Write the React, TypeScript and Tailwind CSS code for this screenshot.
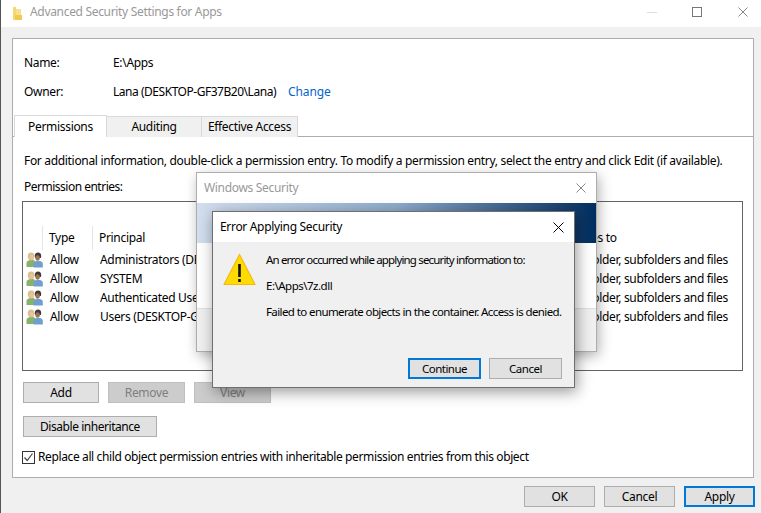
const ENTRIES = [
  "Administrators (DESKTOP-GF37B20\\Administrators)",
  "SYSTEM",
  "Authenticated Users",
  "Users (DESKTOP-GF37B20\\Users)",
];

function CloseX({ size, color, width = 1 }: { size: number; color: string; width?: number }) {
  return (
    <svg width={size} height={size} viewBox={`0 0 ${size} ${size}`} className="shrink-0">
      <path d={`M0.5 0.5 L${size - 0.5} ${size - 0.5} M${size - 0.5} 0.5 L0.5 ${size - 0.5}`} stroke={color} strokeWidth={width} fill="none" />
    </svg>
  );
}

function UsersIcon() {
  return (
    <svg width="17" height="16" viewBox="0 0 17 16" className="shrink-0">
      <path d="M0.5 15 V11 C0.5 9.2 2.4 8.4 4 8 L7 8 C8.6 8.4 9 9.2 9.5 10 V15 Z" fill="#86b36a" />
      <path d="M1.8 5 C1.5 1.8 3.2 0.6 5.2 0.6 C7.4 0.6 8.6 2 8.4 5 C8 7.4 6.8 8.6 5.2 8.6 C3.6 8.6 2.2 7.4 1.8 5 Z" fill="#d8c089" />
      <ellipse cx="5.8" cy="5.2" rx="2" ry="2.6" fill="#e9c3a0" />
      <path d="M7.5 15.5 V12 C7.5 10 9.4 9.2 11 9 L14 9 C15.8 9.4 16.8 10.4 16.8 12 V15.5 Z" fill="#6f9fd0" />
      <path d="M8.8 4.6 C8.6 1.6 10.2 0.6 12 0.6 C14 0.6 15.4 2 15.2 4.6 L14.8 6 L9.4 6 Z" fill="#3d3a38" />
      <ellipse cx="11.6" cy="6" rx="2.2" ry="2.8" fill="#9b7253" />
    </svg>
  );
}

function WarningIcon() {
  return (
    <svg width="33" height="33" viewBox="0 0 33 33" className="shrink-0">
      <path d="M16.5 1.5 L32 31.5 H1 Z" fill="#ffdc00" stroke="#f5b916" strokeWidth="1.2" strokeLinejoin="round" />
      <rect x="15.2" y="11" width="2.6" height="13" fill="#111111" />
      <rect x="15.2" y="26" width="2.6" height="3" fill="#111111" />
    </svg>
  );
}

function FolderIcon() {
  return (
    <svg width="10" height="13" viewBox="0 0 10 13" className="shrink-0">
      <path d="M1 0 H4 V13 H1 Z" fill="#f6d775" />
      <path d="M4 2 H9 V12 H4 Z" fill="#f9e08e" />
      <path d="M3 8 H10 V13 H3 Z" fill="#f2c94c" />
    </svg>
  );
}

function Btn({ label, w, primary, disabled }: { label: string; w: string; primary?: boolean; disabled?: boolean }) {
  const tone = disabled
    ? "bg-[#cccccc] border border-[#bfbfbf] text-[#7f7f7f]"
    : primary
      ? "bg-[#e1e1e1] border-2 border-[#0078d7] text-black"
      : "bg-[#e1e1e1] border border-[#adadad] text-black";
  return <div className={`${w} h-[21px] flex items-center justify-center ${tone}`}>{label}</div>;
}

function Tab({ label, w, active }: { label: string; w: string; active?: boolean }) {
  return (
    <div
      className={`${w} flex items-center justify-center border-[#d9d9d9] ${
        active
          ? "h-[22px] bg-white border-t border-l border-r -mb-px z-10"
          : "h-[21px] mt-px bg-[#f0f0f0] border-t border-r"
      }`}
    >
      {label}
    </div>
  );
}

export default function App() {
  return (
    <div className="relative w-[761px] h-[513px] overflow-hidden bg-[#f0f0f0] border-l border-[#555555] text-[12px] leading-[20px] tracking-[-0.32px] text-black font-['Noto_Sans',sans-serif]">
      <div className="h-[27px] bg-white flex items-center pl-[11px]">
        <FolderIcon />
        <span className="ml-[8px] mb-[3px] text-[#999999]">Advanced Security Settings for Apps</span>
        <div className="ml-auto flex items-center mb-[3px]">
          <div className="w-[10px] h-px bg-[#dddddd]" />
          <div className="ml-[35px] w-[10px] h-[10px] border border-[#777777]" />
          <div className="ml-[36px] mr-[13px]">
            <CloseX size={10} color="#888888" />
          </div>
        </div>
      </div>

      <div className="mt-[11px] ml-[11px] w-[742px] h-[440px] bg-white border border-[#adadad] pt-[14px]">
        <div className="flex pl-[11px]">
          <span className="w-[89px]">Name:</span>
          <span>E:\Apps</span>
        </div>
        <div className="flex pl-[11px] mt-[9px]">
          <span className="w-[89px]">Owner:</span>
          <span className="tracking-[-0.47px]">Lana (DESKTOP-GF37B20\Lana)</span>
          <span className="ml-[12px] tracking-[-0.1px] text-[#0066cc]">Change</span>
        </div>

        <div className="flex mt-[13px] pl-px h-[22px] border-b border-[#adadad]">
          <Tab label="Permissions" w="w-[93px]" active />
          <Tab label="Auditing" w="w-[95px]" />
          <Tab label="Effective Access" w="w-[96px]" />
        </div>

        <div className="mt-[14px] pl-[11px]">
          For additional information, double-click a permission entry. To modify a permission entry, select the entry and click Edit (if available).
        </div>
        <div className="mt-[6px] pl-[11px] tracking-[-0.5px]">Permission entries:</div>

        <div className="mt-[4px] ml-[9px] w-[721px] h-[170px] border border-[#646464] pt-[24px]">
          <div className="flex h-[24px] items-center">
            <div className="w-[20px] h-full border-r border-[#e5e5e5]" />
            <div className="w-[50px] h-full pl-[6px] border-r border-[#e5e5e5] flex items-center">Type</div>
            <div className="flex-1 pl-[6px]">Principal</div>
            <div className="w-[178px]">Applies to</div>
          </div>
          {ENTRIES.map((principal) => (
            <div key={principal} className="flex h-[19px] items-center">
              <div className="w-[27px] pl-[3px]">
                <UsersIcon />
              </div>
              <div className="w-[50px]">Allow</div>
              <div className="w-[100px] whitespace-nowrap overflow-hidden">{principal}</div>
              <div className="flex-1" />
              <div className="w-[178px] whitespace-nowrap">This folder, subfolders and files</div>
            </div>
          ))}
        </div>

        <div className="flex mt-[11px] ml-[10px] gap-[9px]">
          <Btn label="Add" w="w-[76px]" />
          <Btn label="Remove" w="w-[77px]" disabled />
          <Btn label="View" w="w-[77px]" disabled />
        </div>
        <div className="mt-[13px] ml-[10px] tracking-[-0.45px]">
          <Btn label="Disable inheritance" w="w-[134px]" />
        </div>
        <div className="flex items-center mt-[10px] ml-[9px]">
          <div className="w-[13px] h-[13px] border border-[#333333] flex items-center justify-center">
            <svg width="11" height="11" viewBox="0 0 11 11">
              <path d="M1.5 5.5 L4.2 8.5 L9.5 1.5" fill="none" stroke="#444444" strokeWidth="1.2" />
            </svg>
          </div>
          <span className="ml-[3px] tracking-[-0.38px]">Replace all child object permission entries with inheritable permission entries from this object</span>
        </div>
      </div>

      <div className="flex justify-end gap-[9px] mt-[8px] mr-[6px]">
        <Btn label="OK" w="w-[71px]" />
        <Btn label="Cancel" w="w-[71px]" />
        <Btn label="Apply" w="w-[71px]" primary />
      </div>

      {/* dialog behind */}
      <div className="absolute left-[195px] top-[172px] w-[401px] h-[180px] bg-white border border-[#adadad] shadow-[2px_4px_12px_rgba(0,0,0,0.3)]">
        <div className="h-[30px] flex items-center pl-[7px] text-[#999999]">
          <span>Windows Security</span>
          <div className="ml-auto mr-[10px]">
            <CloseX size={10} color="#888888" />
          </div>
        </div>
        <div className="h-[40px] bg-gradient-to-r from-[#d3deee] via-[#8eaccc] to-[#002e5f]" />
        <div className="h-[65px] bg-white" />
        <div className="h-[43px] bg-[#f0f0f0] border-t border-[#dfdfdf]" />
      </div>

      {/* error dialog */}
      <div className="absolute left-[211px] top-[211px] w-[363px] h-[177px] bg-[#f0f0f0] border border-[#6f6f6f] shadow-[2px_4px_14px_rgba(0,0,0,0.4)]">
        <div className="h-[30px] bg-white flex items-center pl-[7px]">
          <span>Error Applying Security</span>
          <div className="ml-auto mr-[10px]">
            <CloseX size={11} color="#000000" />
          </div>
        </div>
        <div className="flex pl-[10px] pt-[8px]">
          <div className="mt-[3px]">
            <WarningIcon />
          </div>
          <div className="ml-[10px] whitespace-nowrap text-[11.5px]">
            <div className="tracking-[-0.84px]">An error occurred while applying security information to:</div>
            <div className="mt-[6px] tracking-[-0.5px]">E:\Apps\7z.dll</div>
            <div className="mt-[6px] tracking-[-0.6px]">Failed to enumerate objects in the container. Access is denied.</div>
          </div>
        </div>
        <div className="absolute right-[12px] bottom-[8px] flex gap-[8px] text-[11.5px] tracking-[-0.5px]">
          <Btn label="Continue" w="w-[73px]" primary />
          <Btn label="Cancel" w="w-[73px]" />
        </div>
      </div>
    </div>
  );
}
